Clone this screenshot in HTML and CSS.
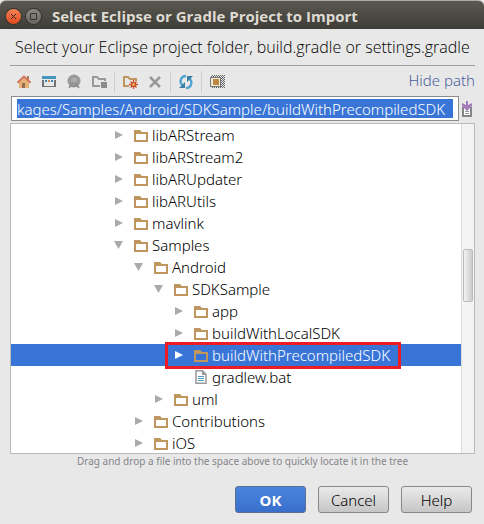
FILE: index.html
```html
<!DOCTYPE html>
<html lang="en">
<head>
<meta charset="utf-8">
<title>Select Eclipse or Gradle Project to Import</title>
<link rel="stylesheet" href="styles.css">
</head>
<body>
<svg class="defs" aria-hidden="true">
  <symbol id="folder" viewBox="0 0 14 13"><path fill="#bf9660" fill-rule="evenodd" d="M0 1h6l2 2h6v10H0zM2 5v6h10V5z"/></symbol>
  <symbol id="closed" viewBox="0 0 10 10"><path d="M1 1v8l8-4z"/></symbol>
  <symbol id="open" viewBox="0 0 10 10"><path d="M0 1h9L4.500 9z"/></symbol>
</svg>
<main class="dialog">
  <header class="titlebar">
    <button class="wbtn close" aria-label="Close"><svg width="7" height="7" viewBox="0 0 7 7"><path d="M1 1l5 5M6 1l-5 5"/></svg></button>
    <button class="wbtn" aria-label="Maximize"><svg width="7" height="7" viewBox="0 0 7 7"><path d="M.5.5h6v6h-6z"/></svg></button>
    <h1>Select Eclipse or Gradle Project to Import</h1>
  </header>
  <p class="intro">Select your Eclipse project folder, build.gradle or settings.gradle</p>
  <section class="content">
    <div class="toolbar">
      <button aria-label="Home"><svg width="16" height="16" viewBox="0 0 16 16"><path fill="#a87858" d="M11 2h2v4h-2z"/><path fill="#e3b274" d="M3 8l5-4 5 4v6H3z"/><path fill="none" stroke="#d1705c" stroke-width="2" d="M1.500 8.800L8 2.600l6.500 6.200"/><path fill="#946b50" d="M6 9h3v5H6z"/></svg></button>
      <button aria-label="Project directory"><svg width="16" height="16" viewBox="0 0 16 16"><path fill="#4295bd" d="M1 2h14v3H1z"/><path fill="#727272" d="M1 6h2v6h10V6h2v7H1z"/><path fill="#3a86c0" d="M4 6h2v2H4zM10 6h2v2h-2z"/><path fill="#d08a45" d="M7 6h2v2H7z"/></svg></button>
      <button aria-label="Module directory" disabled><svg width="16" height="16" viewBox="0 0 16 16"><circle cx="8" cy="7" r="6.500" fill="#999"/><circle cx="8" cy="6.500" r="3" fill="#adadad"/><path fill="none" stroke="#8c8c8c" stroke-width="1.500" d="M7 8l-4 6M9 8l4 6M4 12h8"/></svg></button>
      <button aria-label="Desktop directory" disabled><svg width="16" height="16" viewBox="0 0 16 16"><path fill="none" stroke="#999" stroke-width="2" d="M14 7V5H8L6 3H2v9h7"/><path fill="#8c8c8c" d="M10 8h6v6h-6z"/></svg></button>
      <span class="sep"></span>
      <button aria-label="New folder"><svg width="16" height="16" viewBox="0 0 16 16"><path fill="none" stroke="#bf9660" stroke-width="2" d="M14 7V5H8L6 3H2v9h5"/><path stroke="#c84d28" stroke-width="1.300" d="M11.500 6v9M7 10.500h9M8.500 7.500l6 6M14.500 7.500l-6 6"/><circle cx="11.500" cy="10.500" r="2.600" fill="#c84d28"/><circle cx="11.500" cy="10.500" r="1.300" fill="#f5c36b"/></svg></button>
      <button aria-label="Delete"><svg width="16" height="16" viewBox="0 0 16 16"><path stroke="#999" stroke-width="2.500" d="M3 3l10 10M13 3L3 13"/></svg></button>
      <span class="sep"></span>
      <button aria-label="Refresh"><svg width="16" height="16" viewBox="0 0 16 16"><path fill="none" stroke="#4fa3cc" stroke-width="2.400" d="M8 2C3.500 2 1.700 6 3 9.500l2 2M8 14c4.500 0 6.300-4 5-7.500l-2-2"/><path fill="#3a7da5" d="M1 14h6V8zM15 2H9v6z"/></svg></button>
      <span class="sep"></span>
      <button aria-label="Show hidden files"><svg width="16" height="16" viewBox="0 0 16 16"><defs><pattern id="dots" width="2" height="2" patternUnits="userSpaceOnUse"><path fill="#666" d="M0 0h1v1H0zM1 1h1v1H1z"/></pattern></defs><path fill="url(#dots)" d="M2 1h14v13H2z"/><path fill="#777" d="M1 3h11v10H1z"/><path fill="#f1ead7" d="M2 4h9v8H2z"/><path fill="#bd8846" d="M4 5h6v6H4z"/></svg></button>
      <a class="hide" href="#path">Hide path</a>
    </div>
    <div class="pathrow">
      <input id="path" aria-label="Path" value="kages/Samples/Android/SDKSample/buildWithPrecompiledSDK">
      <button aria-label="Recent paths"><svg width="12" height="16" viewBox="0 0 12 16"><path fill="#858585" d="M1 6h2v8h6V6h2v10H1z"/><path fill="#fff" d="M3 7h6v7H3z"/><path fill="#999" d="M4 10h4v1H4zM4 12h4v1H4z"/><path fill="#a27bb8" d="M5 0h2v4l4-2v3L6 10 1 5V2l4 2z"/></svg></button>
    </div>
    <div class="treebox">
      <ul class="tree">
        <li class="l0"><svg class="arrow"><use href="#closed"/></svg><svg class="folder"><use href="#folder"/></svg>libARStream</li>
        <li class="l0"><svg class="arrow"><use href="#closed"/></svg><svg class="folder"><use href="#folder"/></svg>libARStream2</li>
        <li class="l0"><svg class="arrow"><use href="#closed"/></svg><svg class="folder"><use href="#folder"/></svg>libARUpdater</li>
        <li class="l0"><svg class="arrow"><use href="#closed"/></svg><svg class="folder"><use href="#folder"/></svg>libARUtils</li>
        <li class="l0"><svg class="arrow"><use href="#closed"/></svg><svg class="folder"><use href="#folder"/></svg>mavlink</li>
        <li class="l0"><svg class="arrow"><use href="#open"/></svg><svg class="folder"><use href="#folder"/></svg>Samples</li>
        <li class="l1"><svg class="arrow"><use href="#open"/></svg><svg class="folder"><use href="#folder"/></svg>Android</li>
        <li class="l2"><svg class="arrow"><use href="#open"/></svg><svg class="folder"><use href="#folder"/></svg>SDKSample</li>
        <li class="l3"><svg class="arrow"><use href="#closed"/></svg><svg class="folder"><use href="#folder"/></svg>app</li>
        <li class="l3"><svg class="arrow"><use href="#closed"/></svg><svg class="folder"><use href="#folder"/></svg>buildWithLocalSDK</li>
        <li class="l3 selected"><span class="node"><svg class="arrow"><use href="#closed"/></svg><svg class="folder"><use href="#folder"/></svg>buildWithPrecompiledSDK</span></li>
        <li class="l3"><span class="arrow"></span><svg class="folder file" viewBox="0 0 14 14"><path fill="#fff" stroke="#999" stroke-width="1.500" d="M2 .8h6.500L12 4.200v9H2z"/><path fill="#999" d="M8 0v5h4z"/><path stroke="#4b9dbb" d="M4 6.500h6M4 8.500h6M4 10.500h6"/></svg>gradlew.bat</li>
        <li class="l2"><svg class="arrow"><use href="#closed"/></svg><svg class="folder"><use href="#folder"/></svg>uml</li>
        <li class="l1"><svg class="arrow"><use href="#closed"/></svg><svg class="folder"><use href="#folder"/></svg>Contributions</li>
        <li class="l1"><svg class="arrow"><use href="#closed"/></svg><svg class="folder"><use href="#folder"/></svg>iOS</li>
      </ul>
      <div class="scroll"><div class="thumb"></div></div>
    </div>
    <p class="hint">Drag and drop a file into the space above to quickly locate it in the tree</p>
  </section>
  <footer class="actions">
    <button class="btn primary">OK</button>
    <button class="btn">Cancel</button>
    <button class="btn">Help</button>
  </footer>
</main>
</body>
</html>
```
FILE: styles.css
```css
* { box-sizing: border-box; }
body {
  margin: 0;
  background: #e8e8e8;
  color: #000;
  font: 300 15px/22px "Noto Sans", "Open Sans", sans-serif;
}
button { border: 0; padding: 0; background: none; font: inherit; color: inherit; }
svg { display: block; flex: none; }
.defs { display: none; }
.titlebar {
  display: flex;
  align-items: center;
  gap: 5px;
  height: 29px;
  padding: 2px 6px 0;
  border-top: 1px solid #a9aaa5;
  border-radius: 6px 6px 0 0;
  background: linear-gradient(#5a5850, #3e3d38);
}
.titlebar h1 {
  margin: 0 0 0 6px;
  color: #dfdbd2;
  font: 700 15px/20px "Open Sans", sans-serif;
  white-space: nowrap;
}
.wbtn {
  display: grid;
  place-items: center;
  width: 15px;
  height: 15px;
  border-radius: 50%;
  background: linear-gradient(#8b8a82, #66655f);
  box-shadow: 0 0 0 1px #35342f;
}
.wbtn.close { background: linear-gradient(#f58257, #e0491b); }
.wbtn svg { fill: none; stroke: #3c2f27; }
.intro { margin: 0; padding: 7px 15px; font-family: "Open Sans", sans-serif; font-size: 16px; white-space: nowrap; }
.content { margin: 0 9px 0 10px; border-top: 1px solid #a0a0a0; }
.toolbar { display: flex; align-items: center; gap: 9px; height: 30px; padding: 2px 0 0 6px; }
.sep { width: 1px; height: 22px; background: #d0d0d0; margin: 0 -2px; }
.hide { margin-left: auto; margin-bottom: 4px; color: #4b5f9b; text-decoration: none; }
.pathrow { display: flex; align-items: center; gap: 2px; padding: 0 2px 0 1px; }
.pathrow input {
  flex: 1;
  min-width: 0;
  height: 25px;
  padding: 2px 5px;
  border: 1px solid #8d8d8d;
  background: #3875d7 content-box;
  box-shadow: inset 0 0 0 2px #fff, inset 5px 0 #fff, inset -5px 0 #fff;
  color: #fff;
  font: inherit;
  outline: 0;
}
.treebox { display: flex; height: 331px; margin-top: 2px; border: 1px solid #bababa; background: #fff; overflow: hidden; }
.tree { flex: 1; margin: 0; padding: 0; list-style: none; }
.tree li, .node { display: flex; align-items: center; height: 22px; white-space: nowrap; }
.arrow { width: 10px; height: 10px; margin-right: 10px; fill: #aaa; }
.folder { width: 14px; height: 13px; margin-right: 4px; }
.file { height: 14px; }
.l0 { padding-left: 103px; }
.l1 { padding-left: 123px; }
.l2 { padding-left: 143px; }
.l3 { padding-left: 163px; }
.selected { background: #3875d7; color: #fff; }
.selected .arrow { fill: #fff; }
.node { position: relative; }
.node::after { content: ""; position: absolute; inset: -2px -11px -3px -9px; border: 3px solid #ed1c24; }
.scroll { width: 13px; border-left: 1px solid #ddd; background: #f3f3f3; }
.thumb { height: 53px; margin: 125px 1px 0; border: 1px solid #bbb; border-radius: 2px; background: linear-gradient(90deg, #f2f2f2, #ccc); }
.hint { margin: 0; color: #85858b; font: 400 10px/14px "Noto Sans", sans-serif; text-align: center; }
.actions { display: flex; justify-content: flex-end; gap: 12px; padding: 18px 12px 11px; }
.btn {
  width: 71px;
  height: 27px;
  border: 1px solid #888;
  border-radius: 3px;
  background: linear-gradient(#eaeaea, #c6c6c6);
}
.primary { border-color: #5c6f90; background: linear-gradient(#4a84dd, #3a70cc); color: #fff; font-weight: 700; }
```
